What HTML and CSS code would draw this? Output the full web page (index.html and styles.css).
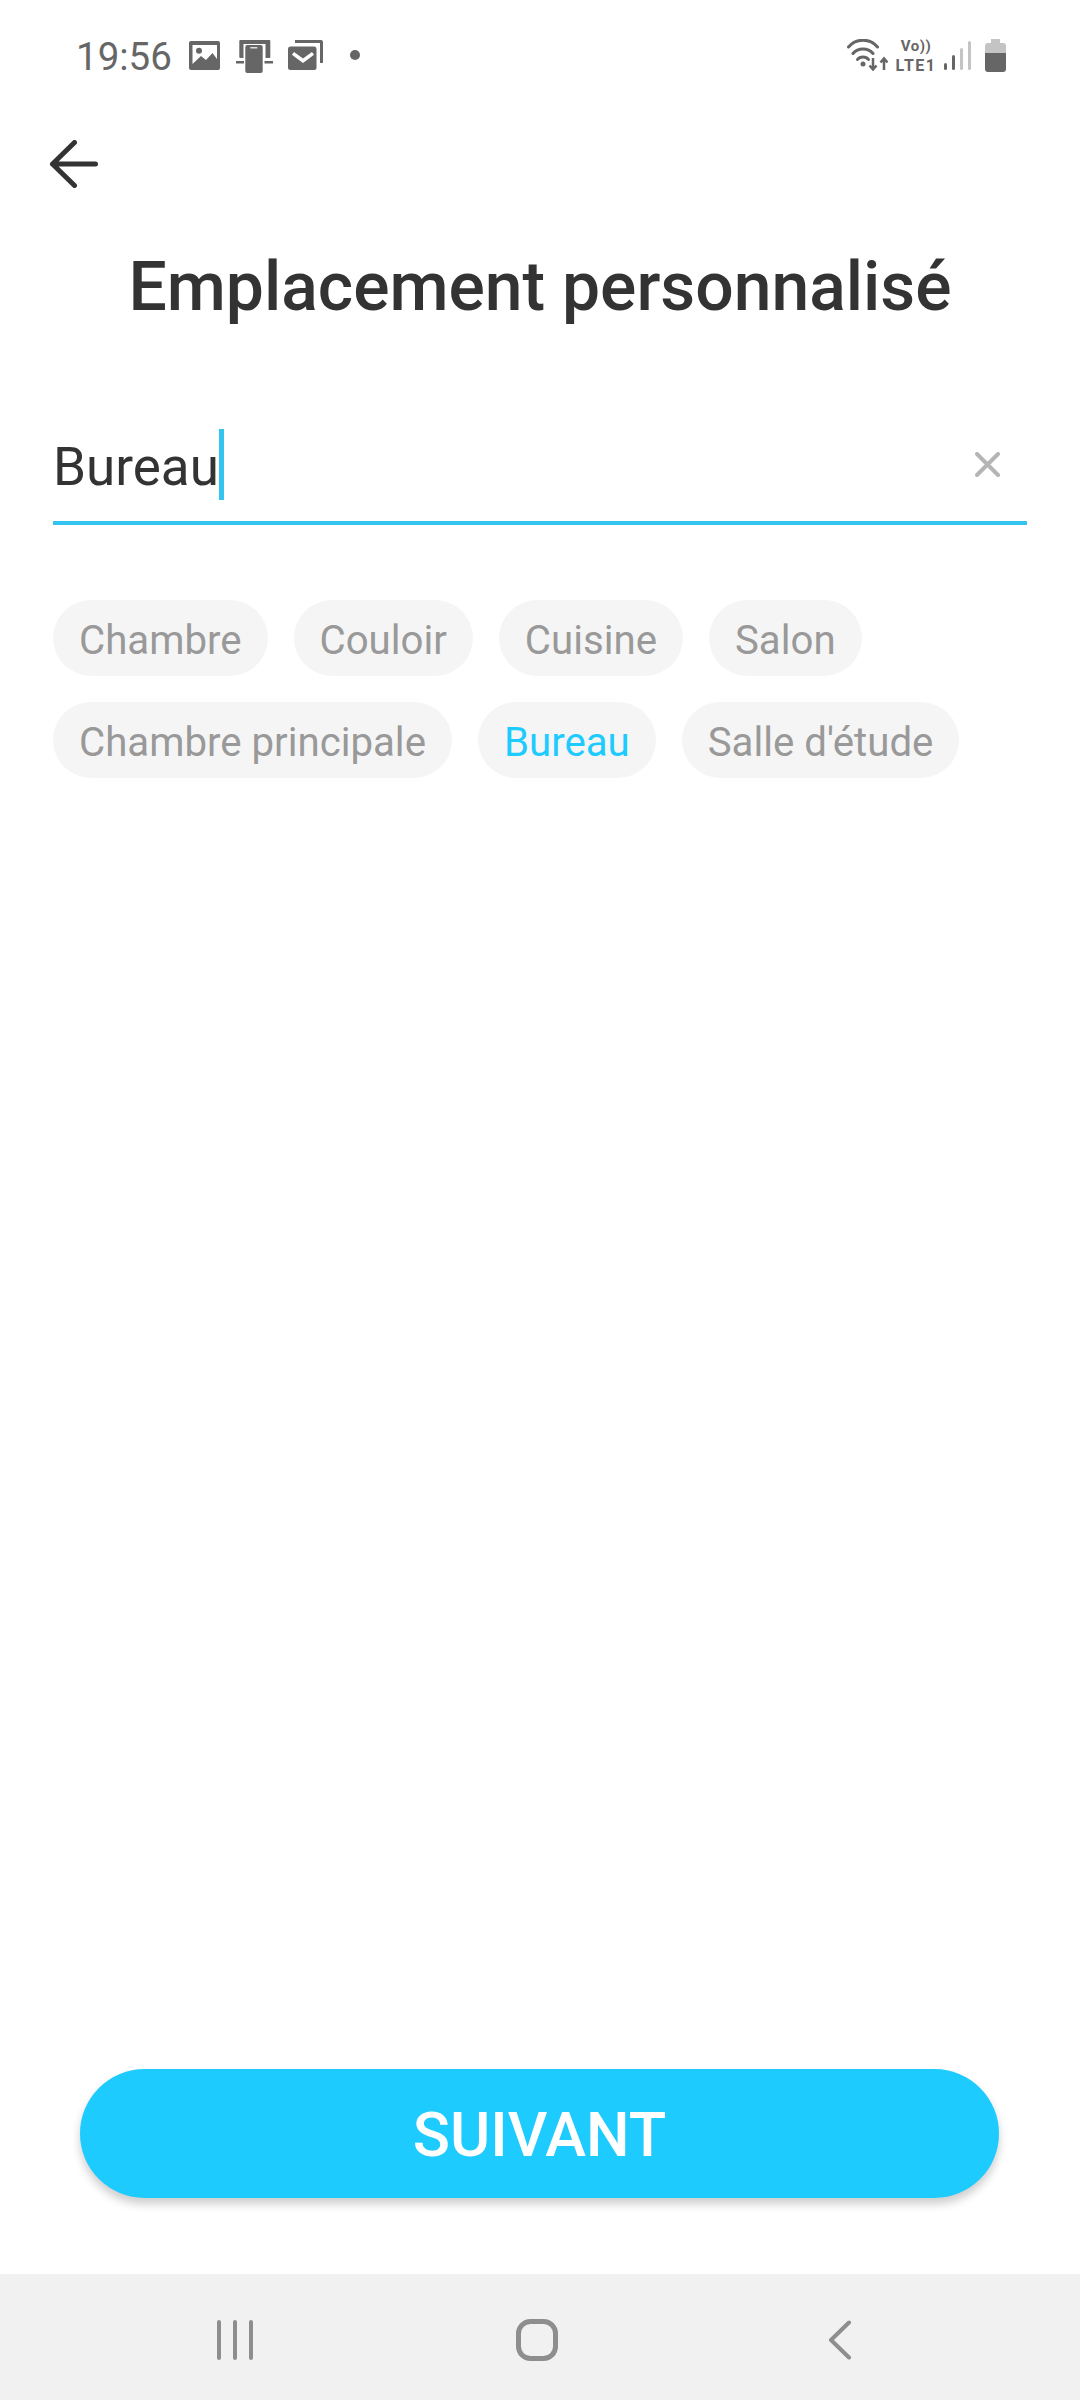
FILE: index.html
```html
<!DOCTYPE html>
<html lang="fr">
<head>
    <meta charset="UTF-8">
    <meta name="viewport" content="width=device-width, initial-scale=1.0">
    <title>Emplacement personnalisé</title>
    <link rel="stylesheet" href="styles.css">
</head>
<body>
    <div class="status-bar">
        <div class="status-left">
            <span class="clock">19:56</span>
            <svg class="note-image" width="31" height="29" viewBox="0 0 31 29">
                <rect width="31" height="29" rx="2" fill="#666"/>
                <path d="M3.500 4 H28 V18 L23.500 12 L17 19 L12 15 L3.500 23 Z" fill="#fff"/>
                <circle cx="10" cy="9.700" r="3" fill="#666"/>
            </svg>
            <svg class="note-phone" width="37" height="33" viewBox="0 0 37 33">
                <rect x="3.300" y="0" width="31" height="18" rx="1" fill="#666"/>
                <rect x="7.500" y="4" width="22" height="29" fill="#fff"/>
                <path d="M0 22.300 H8 M28.500 22.300 H37" stroke="#666" stroke-width="2.500" fill="none"/>
                <rect x="9.300" y="5" width="17.400" height="28" rx="2" fill="#666"/>
                <rect x="14.300" y="7" width="7" height="1.500" fill="#ddd"/>
            </svg>
            <svg class="note-mail" width="35" height="30" viewBox="0 0 35 30">
                <path d="M7 0 H33 a2 2 0 0 1 2 2 V23 H32 V3 H7 Z" fill="#666"/>
                <rect x="0" y="6.500" width="28.500" height="23.500" rx="2.500" fill="#666"/>
                <path d="M5 13.300 L15 20.700 L25 13.300" fill="none" stroke="#fff" stroke-width="3.500"/>
            </svg>
            <span class="note-dot"></span>
        </div>
        <div class="status-right">
            <svg width="41" height="32" viewBox="0 0 41 32">
                <path d="M1.500 8 C9 -1 23 -1 30.500 8 M6 14.500 C11 8.500 21 8.500 26 14.500 M10.500 20.500 C13 17 19 17 21.500 20.500" fill="none" stroke="#666" stroke-width="3" stroke-linecap="round"/>
                <circle cx="16" cy="25" r="2.500" fill="#666"/>
                <path d="M26 19 V30 M22.500 26.500 L26 30.500 L29.500 26.500" fill="none" stroke="#666" stroke-width="2.500"/>
                <path d="M37 31 V20 M33.500 23.500 L37 19.500 L40.500 23.500" fill="none" stroke="#666" stroke-width="2.500"/>
            </svg>
            <div class="volte">
                <span class="volte-top">Vo))</span>
                <span class="volte-bottom">LTE1</span>
            </div>
            <svg width="27" height="29" viewBox="0 0 27 29">
                <rect x="0" y="22" width="3" height="7" rx="1.500" fill="#666"/>
                <rect x="8" y="14" width="3" height="15" rx="1.500" fill="#666"/>
                <rect x="16" y="7" width="3" height="22" rx="1.500" fill="#c4c4c4"/>
                <rect x="24" y="0" width="3" height="29" rx="1.500" fill="#c4c4c4"/>
            </svg>
            <svg class="battery" width="21" height="33" viewBox="0 0 21 33">
                <path d="M6 0 H15 V4 H18 a3 3 0 0 1 3 3 V14 H0 V7 a3 3 0 0 1 3 -3 H6 Z" fill="#c4c4c4"/>
                <path d="M0 14 H21 V30 a3 3 0 0 1 -3 3 H3 a3 3 0 0 1 -3 -3 Z" fill="#666"/>
            </svg>
        </div>
    </div>

    <div class="toolbar">
        <svg width="50" height="48" viewBox="0 0 50 48">
            <path d="M46.500 24 H3.500 M25.500 2.500 L3.500 24 L25.500 45.500" fill="none" stroke="#333" stroke-width="5" stroke-linecap="round" stroke-linejoin="round"/>
        </svg>
    </div>

    <h1 class="title">Emplacement personnalisé</h1>

    <div class="name-field">
        <span class="name-text">Bureau</span><span class="caret"></span>
        <svg class="clear-icon" width="25" height="25" viewBox="0 0 25 25">
            <path d="M2 2 L23 23 M23 2 L2 23" stroke="#b5b5b5" stroke-width="4" stroke-linecap="round"/>
        </svg>
    </div>

    <div class="chips">
        <span class="chip">Chambre</span>
        <span class="chip">Couloir</span>
        <span class="chip">Cuisine</span>
        <span class="chip">Salon</span>
        <span class="chip">Chambre principale</span>
        <span class="chip chip-active">Bureau</span>
        <span class="chip">Salle d'étude</span>
    </div>

    <div class="spacer"></div>

    <button type="button" class="next-button">SUIVANT</button>

    <div class="nav-bar">
        <svg width="38" height="40" viewBox="0 0 38 40">
            <path d="M3 2 V38 M19 2 V38 M35 2 V38" stroke="#8e8e8e" stroke-width="4" stroke-linecap="round"/>
        </svg>
        <svg class="nav-home" width="42" height="42" viewBox="0 0 42 42">
            <rect x="2.500" y="2.500" width="37" height="37" rx="12" fill="none" stroke="#8e8e8e" stroke-width="5"/>
        </svg>
        <svg class="nav-back" width="24" height="40" viewBox="0 0 24 40">
            <path d="M21 2.500 L3 20 L21 37.500" fill="none" stroke="#8e8e8e" stroke-width="4" stroke-linecap="round" stroke-linejoin="round"/>
        </svg>
    </div>
</body>
</html>
```

FILE: styles.css
```css
* {
    box-sizing: border-box;
}
body {
    margin: 0;
    width: 1080px;
    height: 2400px;
    display: flex;
    flex-direction: column;
    background-color: #fff;
    font-family: Roboto, "Noto Sans", sans-serif;
    color: #333;
    overflow: hidden;
}
.status-bar {
    height: 110px;
    padding: 0 74px 0 76px;
    display: flex;
    justify-content: space-between;
    align-items: center;
}
.status-left {
    display: flex;
    align-items: center;
}
.clock {
    font-size: 38.5px;
    padding-top: 2px;
    color: #666;
}
.note-image {
    margin-left: 17px;
}
.note-phone {
    margin-left: 16px;
    margin-top: 2px;
}
.note-mail {
    margin-left: 15px;
}
.note-dot {
    width: 10px;
    height: 10px;
    margin-left: 27px;
    border-radius: 50%;
    background-color: #666;
}
.status-right {
    display: flex;
    align-items: center;
    gap: 9px;
}
.volte {
    width: 38px;
    padding-top: 2px;
    display: flex;
    flex-direction: column;
    align-items: center;
    font-weight: 700;
    color: #666;
    line-height: 19px;
    white-space: nowrap;
}
.volte-top {
    font-size: 15px;
    letter-spacing: 0.5px;
}
.volte-bottom {
    font-size: 16px;
    letter-spacing: 1.5px;
}
.battery {
    margin-left: 5px;
}
.toolbar {
    height: 108px;
    padding-left: 49px;
    display: flex;
    align-items: center;
}
.title {
    margin: 29px 0 0;
    text-align: center;
    font-size: 67.8px;
    line-height: 80px;
    font-weight: 500;
    color: #333;
}
.name-field {
    margin: 102px 53px 0;
    height: 96px;
    padding-bottom: 21px;
    display: flex;
    align-items: center;
    border-bottom: 4px solid #33c5f0;
}
.name-text {
    font-size: 53px;
    color: #333;
    padding-top: 4px;
}
.caret {
    width: 5px;
    height: 71px;
    background-color: #33c5f0;
}
.clear-icon {
    margin-left: auto;
    margin-right: 27px;
}
.chips {
    margin: 75px 53px 0;
    display: flex;
    flex-wrap: wrap;
    gap: 26px;
}
.chip {
    height: 76px;
    padding: 5px 26px 0;
    display: flex;
    align-items: center;
    border-radius: 38px;
    background-color: #f5f5f5;
    color: #999;
    font-size: 40.2px;
}
.chip-active {
    color: #1ecbff;
}
.spacer {
    flex: 1;
}
.next-button {
    margin: 0 81px 76px 80px;
    height: 129px;
    padding-top: 4px;
    border: none;
    border-radius: 65px;
    background-color: #1ecbff;
    color: #fff;
    font-family: inherit;
    font-size: 61.5px;
    font-weight: 500;
    box-shadow: 0 6px 10px rgba(0, 0, 0, 0.2);
}
.nav-bar {
    height: 126px;
    padding: 6px 0 0 216px;
    display: flex;
    align-items: center;
    background-color: #f1f1f1;
}
.nav-home {
    margin-left: 262px;
}
.nav-back {
    margin-left: 270px;
}
```
